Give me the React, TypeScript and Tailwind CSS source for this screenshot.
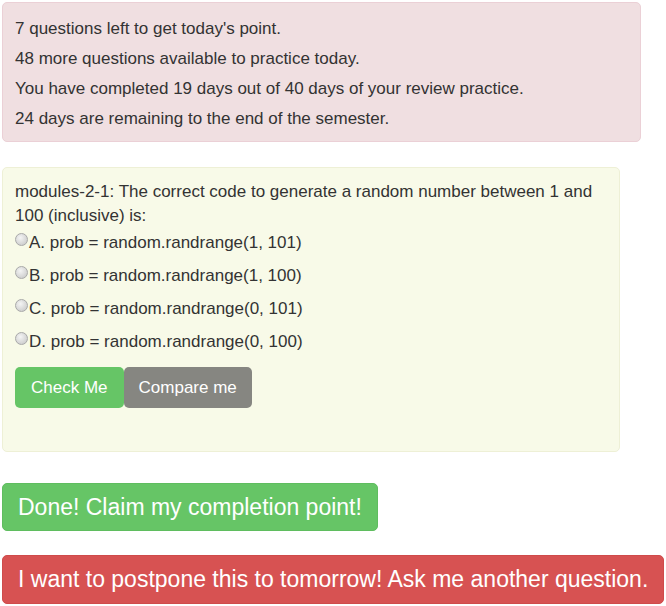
import React, { useState } from 'react';

const stats = [
  "7 questions left to get today's point.",
  '48 more questions available to practice today.',
  'You have completed 19 days out of 40 days of your review practice.',
  '24 days are remaining to the end of the semester.',
];

const choices = [
  'A. prob = random.randrange(1, 101)',
  'B. prob = random.randrange(1, 100)',
  'C. prob = random.randrange(0, 101)',
  'D. prob = random.randrange(0, 100)',
];

// old-style grey radio, the native one looks nothing like it
const Radio: React.FC<{ checked: boolean }> = ({ checked }) => (
  <span className="mt-[2px] mr-[1px] flex h-[13px] w-[13px] shrink-0 items-center justify-center rounded-full border border-[#a9a9a9] bg-[radial-gradient(circle_at_40%_35%,#f4f4f4,#d2d2d2_70%,#c4c4c4)]">
    {checked && <span className="h-[5px] w-[5px] rounded-full bg-[#333]" />}
  </span>
);

export default function App() {
  const [picked, setPicked] = useState<number | null>(null);

  return (
    <div className="min-h-screen bg-white pl-[2px] pt-[2px] text-[17px] text-[#333] [font-family:'Liberation_Sans',Arial,sans-serif]">
      {/* Progress info */}
      <div className="w-[639px] rounded-[5px] border border-[#ebd0d6] bg-[#f0dfe1] pt-[14px] pb-[10px] pl-[12px]">
        {stats.map((line, i) => (
          <p key={i} className={`leading-[24px] ${i < stats.length - 1 ? 'mb-[6px]' : ''}`}>
            {line}
          </p>
        ))}
      </div>

      {/* Question card */}
      <div className="mt-[25px] w-[618px] rounded-[5px] border border-[#eef0d6] bg-[#f8fae8] pt-[12px] pb-[43px] pl-[12px] pr-[20px]">
        <p className="leading-[24px]">
          modules-2-1: The correct code to generate a random number between 1 and 100 (inclusive) is:
        </p>
        <div className="mt-[3px] flex flex-col gap-[9px]">
          {choices.map((c, i) => (
            <label key={i} className="flex cursor-pointer items-start leading-[24px]" onClick={() => setPicked(i)}>
              <Radio checked={picked === i} />
              <span>{c}</span>
            </label>
          ))}
        </div>
        <div className="mt-[13px] flex">
          <button className="h-[41px] rounded-[5px] bg-[#66c566] px-[16px] text-white">Check Me</button>
          <button className="h-[41px] rounded-[5px] bg-[#868681] px-[15px] text-white">Compare me</button>
        </div>
      </div>

      <div className="mt-[31px]">
        <button className="h-[48px] rounded-[5px] border border-[#5fbd5f] bg-[#66c566] px-[15px] text-[23px] text-white">
          Done! Claim my completion point!
        </button>
      </div>
      <div className="mt-[24px]">
        <button className="h-[49px] rounded-[5px] border border-[#cf4b4b] bg-[#d75252] px-[15px] text-[23px] text-white">
          I want to postpone this to tomorrow! Ask me another question.
        </button>
      </div>
    </div>
  );
}
